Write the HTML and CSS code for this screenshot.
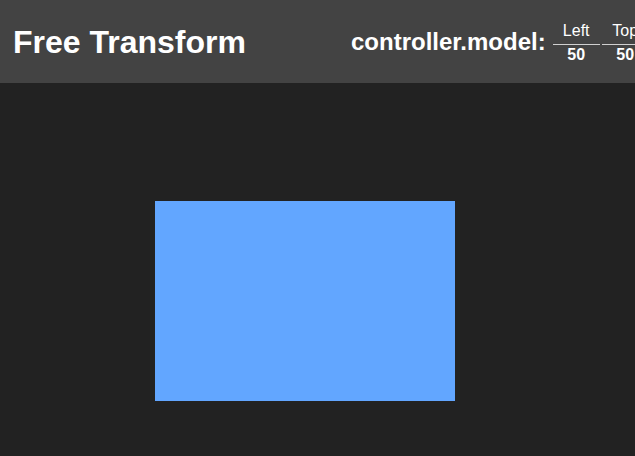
FILE: index.html
```html
<!DOCTYPE html>
<html>
<head>
<meta charset="utf-8">
<link rel="stylesheet" href="styles.css">
</head>
<body>
<header class="bar">
  <h1 class="title">Free Transform</h1>
  <div class="model">
    <span class="model-label">controller.model:</span>
    <div class="fields">
      <div class="field"><div class="field-name">Left</div><div class="field-value">50</div></div>
      <div class="field"><div class="field-name">Top</div><div class="field-value">50</div></div>
    </div>
  </div>
</header>
<main class="canvas">
  <div class="box"></div>
</main>
</body>
</html>
```
FILE: styles.css
```css
html, body {
  margin: 0;
  padding: 0;
  background: #222222;
  font-family: "Liberation Sans", Arial, sans-serif;
  color: #ffffff;
  overflow: hidden;
  width: 635px;
  height: 456px;
}
.bar {
  height: 83px;
  background: #434343;
  display: flex;
  align-items: center;
  padding-left: 13px;
  gap: 105px;
  white-space: nowrap;
}
.title {
  margin: 0;
  font-size: 32px;
  font-weight: bold;
  line-height: 1;
  flex: none;
}
.model {
  display: flex;
  align-items: center;
  gap: 7px;
  flex: none;
}
.model-label {
  font-size: 24px;
  font-weight: bold;
}
.fields {
  display: flex;
  gap: 2px;
}
.field {
  width: 47px;
  text-align: center;
  font-size: 16px;
  line-height: 18px;
}
.field-name {
  padding-top: 2px;
  padding-bottom: 4px;
  border-bottom: 1px solid #d0d0d0;
}
.field-value {
  font-weight: bold;
  padding-top: 1px;
}
.canvas {
  height: 373px;
  padding-top: 118px;
  box-sizing: border-box;
  padding-left: 155px;
}
.box {
  width: 300px;
  height: 200px;
  background: #62a6ff;
}
```
